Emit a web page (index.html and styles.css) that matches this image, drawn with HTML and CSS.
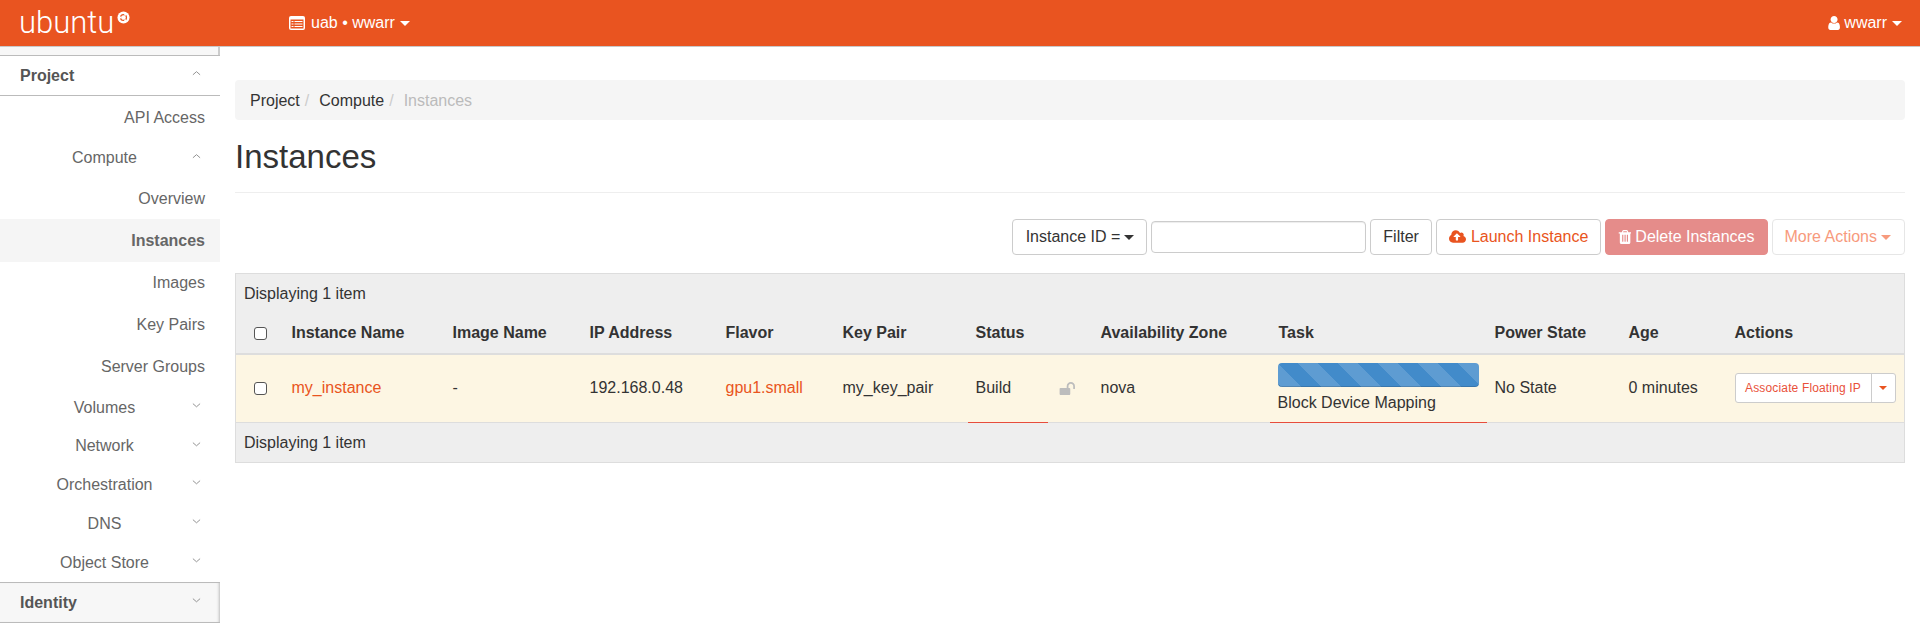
FILE: index.html
```html
<!DOCTYPE html>
<html lang="en">
<head>
    <meta charset="UTF-8">
    <title>Instances</title>
    <link rel="stylesheet" href="styles.css">
</head>
<body>
    <header class="topbar">
        <div class="brand">
            <span class="brand-name">ubuntu</span>
            <svg class="brand-mark" viewBox="0 0 14 14">
                <circle cx="7" cy="7" r="6.5" fill="#fff"/>
                <circle cx="7" cy="7" r="3.2" fill="none" stroke="#e95420" stroke-width="1.3"/>
                <circle cx="3.6" cy="7" r="1.1" fill="#fff"/>
                <circle cx="8.8" cy="4" r="1.1" fill="#fff"/>
                <circle cx="8.8" cy="10" r="1.1" fill="#fff"/>
            </svg>
        </div>
        <div class="project-picker">
            <svg class="icon-list" viewBox="0 0 16 14">
                <rect width="16" height="14" rx="2" fill="#fff"/>
                <rect x="1.5" y="3.5" width="13" height="9" fill="#e95420"/>
                <rect x="2.5" y="5" width="2" height="1" fill="#fff"/>
                <rect x="2.500" y="7.500" width="2" height="1" fill="#fff"/>
                <rect x="2.500" y="10" width="2" height="1" fill="#fff"/>
                <rect x="5.500" y="5" width="8" height="1" fill="#fff"/>
                <rect x="5.500" y="7.500" width="8" height="1" fill="#fff"/>
                <rect x="5.500" y="10" width="8" height="1" fill="#fff"/>
            </svg>
            <span>uab • wwarr</span>
            <span class="caret"></span>
        </div>
        <div class="user-menu">
            <svg class="icon-user" viewBox="128 128 1408 1536"><path fill="#fff" d="M1536 1399q0 109-62.500 187t-150.500 78h-854q-88 0-150.500-78t-62.500-187q0-85 8.500-160.500t31.500-152 58.500-131 94-89 134.500-34.500q131 128 313 128t313-128q76 0 134.500 34.500t94 89 58.500 131 31.500 152 8.500 160.500zm-256-887q0 159-112.500 271.500t-271.500 112.500-271.500-112.500-112.500-271.500 112.500-271.500 271.500-112.500 271.500 112.500 112.500 271.500z"/></svg>
            <span>wwarr</span>
            <span class="caret"></span>
        </div>
    </header>

    <div class="layout">
        <nav class="sidebar">
            <div class="side-strip"></div>
            <div class="side-head project">
                <span class="side-title">Project</span>
                <svg class="chev" viewBox="0 0 10 6"><path d="M1 5 5 1.500 9 5"/></svg>
            </div>
            <a class="side-leaf api">API Access</a>
            <div class="side-group compute">
                <span class="side-label">Compute</span>
                <svg class="chev" viewBox="0 0 10 6"><path d="M1 5 5 1.500 9 5"/></svg>
            </div>
            <a class="side-leaf overview">Overview</a>
            <a class="side-leaf active">Instances</a>
            <a class="side-leaf">Images</a>
            <a class="side-leaf">Key Pairs</a>
            <a class="side-leaf">Server Groups</a>
            <div class="side-group">
                <span class="side-label">Volumes</span>
                <svg class="chev" viewBox="0 0 10 6"><path d="M1 1.500 5 5 9 1.500"/></svg>
            </div>
            <div class="side-group network">
                <span class="side-label">Network</span>
                <svg class="chev" viewBox="0 0 10 6"><path d="M1 1.500 5 5 9 1.500"/></svg>
            </div>
            <div class="side-group">
                <span class="side-label">Orchestration</span>
                <svg class="chev" viewBox="0 0 10 6"><path d="M1 1.500 5 5 9 1.500"/></svg>
            </div>
            <div class="side-group">
                <span class="side-label">DNS</span>
                <svg class="chev" viewBox="0 0 10 6"><path d="M1 1.500 5 5 9 1.500"/></svg>
            </div>
            <div class="side-group">
                <span class="side-label">Object Store</span>
                <svg class="chev" viewBox="0 0 10 6"><path d="M1 1.500 5 5 9 1.500"/></svg>
            </div>
            <div class="side-head identity">
                <span class="side-title">Identity</span>
                <svg class="chev" viewBox="0 0 10 6"><path d="M1 1.500 5 5 9 1.500"/></svg>
            </div>
        </nav>

        <main class="content">
            <ol class="breadcrumb">
                <li>Project</li>
                <li class="sep">/</li>
                <li>Compute</li>
                <li class="sep">/</li>
                <li class="current">Instances</li>
            </ol>
            <h1 class="page-title">Instances</h1>

            <div class="toolbar">
                <button class="btn filter-field">Instance ID = <span class="caret dark"></span></button>
                <input class="filter-input" type="text">
                <button class="btn">Filter</button>
                <button class="btn btn-launch">
                    <svg class="icon-cloud" viewBox="0 128 1920 1536"><path fill="#e95420" d="M1280 864q0-14-9-23l-352-352q-9-9-23-9t-23 9l-351 351q-10 12-10 24 0 14 9 23t23 9h224v352q0 13 9.500 22.500t22.500 9.500h192q13 0 22.500-9.500t9.500-22.500v-352h224q13 0 22.500-9.500t9.500-22.500zm640 288q0 159-112.500 271.500t-271.500 112.500h-1088q-185 0-316.500-131.500t-131.500-316.500q0-130 70-240t188-165q-2-30-2-43 0-212 150-362t362-150q156 0 285.500 87t188.500 231q71-62 166-62 106 0 181 75t75 181q0 76-41 138 130 31 213.500 135.500t83.500 238.500z"/></svg>
                    Launch Instance
                </button>
                <button class="btn btn-delete">
                    <svg class="icon-trash" viewBox="128 128 1408 1536"><path fill="#fff" d="M704 1376v-704q0-14-9-23t-23-9h-64q-14 0-23 9t-9 23v704q0 14 9 23t23 9h64q14 0 23-9t9-23zm256 0v-704q0-14-9-23t-23-9h-64q-14 0-23 9t-9 23v704q0 14 9 23t23 9h64q14 0 23-9t9-23zm256 0v-704q0-14-9-23t-23-9h-64q-14 0-23 9t-9 23v704q0 14 9 23t23 9h64q14 0 23-9t9-23zm-544-992h448l-48-117q-7-9-17-11h-317q-10 2-17 11zm928 32v64q0 14-9 23t-23 9h-96v948q0 83-47 143.500t-113 60.500h-832q-66 0-113-58.500t-47-141.500v-952h-96q-14 0-23-9t-9-23v-64q0-14 9-23t23-9h309l70-167q15-37 54-63t79-26h320q40 0 79 26t54 63l70 167h309q14 0 23 9t9 23z"/></svg>
                    Delete Instances
                </button>
                <button class="btn btn-more">More Actions <span class="caret tinted"></span></button>
            </div>

            <table class="instances">
                <colgroup>
                    <col class="c-check"><col class="c-name"><col class="c-image"><col class="c-ip">
                    <col class="c-flavor"><col class="c-key"><col class="c-status"><col class="c-lock">
                    <col class="c-zone"><col class="c-task"><col class="c-power"><col class="c-age"><col class="c-actions">
                </colgroup>
                <thead>
                    <tr class="summary"><td colspan="13">Displaying 1 item</td></tr>
                    <tr class="heads">
                        <th><input class="check" type="checkbox"></th>
                        <th>Instance Name</th>
                        <th>Image Name</th>
                        <th>IP Address</th>
                        <th>Flavor</th>
                        <th>Key Pair</th>
                        <th colspan="2">Status</th>
                        <th>Availability Zone</th>
                        <th class="task-head">Task</th>
                        <th>Power State</th>
                        <th>Age</th>
                        <th>Actions</th>
                    </tr>
                </thead>
                <tbody>
                    <tr class="row-warn">
                        <td><input class="check" type="checkbox"></td>
                        <td><a class="link">my_instance</a></td>
                        <td>-</td>
                        <td>192.168.0.48</td>
                        <td><a class="link">gpu1.small</a></td>
                        <td>my_key_pair</td>
                        <td class="flagged">Build</td>
                        <td class="lock-cell">
                            <svg class="icon-unlock" viewBox="0 128 1728 1408"><path fill="#bdbdbd" d="M1728 576v256q0 26-19 45t-45 19h-64q-26 0-45-19t-19-45v-256q0-106-75-181t-181-75-181 75-75 181v192h96q40 0 68 28t28 68v576q0 40-28 68t-68 28h-960q-40 0-68-28t-28-68v-576q0-40 28-68t68-28h672v-192q0-185 131.500-316.500t316.500-131.500 316.500 131.500 131.500 316.500z"/></svg>
                        </td>
                        <td>nova</td>
                        <td class="flagged task-cell">
                            <div class="progress"></div>
                            <div class="task-name">Block Device Mapping</div>
                        </td>
                        <td>No State</td>
                        <td>0 minutes</td>
                        <td>
                            <div class="split-btn">
                                <span class="split-main">Associate Floating IP</span>
                                <span class="split-caret"><span class="caret small"></span></span>
                            </div>
                        </td>
                    </tr>
                </tbody>
                <tfoot>
                    <tr class="summary foot"><td colspan="13">Displaying 1 item</td></tr>
                </tfoot>
            </table>
        </main>
    </div>
</body>
</html>
```

FILE: styles.css
```css
* {
    box-sizing: border-box;
}
html, body {
    height: 630px;
    overflow: hidden;
}
body {
    margin: 0;
    font-family: "Liberation Sans", Arial, sans-serif;
    font-size: 16px;
    color: #333;
    background-color: #fff;
}

/* top bar */
.topbar {
    display: flex;
    align-items: center;
    height: 47px;
    background-color: #e95420;
    border-bottom: 1px solid #c8c8c8;
    color: #fff;
}
.brand {
    display: flex;
    align-items: flex-start;
    width: 289px;
    padding-left: 19px;
}
.brand-name {
    font-family: Roboto, sans-serif;
    font-weight: 300;
    font-size: 31px;
    line-height: 40px;
}
.brand-mark {
    width: 13px;
    height: 13px;
    margin: 8px 0 0 3px;
}
.project-picker {
    display: flex;
    align-items: center;
    flex: 1;
}
.icon-list {
    width: 16px;
    height: 14px;
    margin-right: 6px;
}
.user-menu {
    display: flex;
    align-items: center;
    padding-right: 18px;
}
.icon-user {
    width: 13px;
    height: 14px;
    margin-right: 4px;
}
.caret {
    display: inline-block;
    width: 0;
    height: 0;
    margin-left: 5px;
    border-top: 5px solid #fff;
    border-left: 5px solid transparent;
    border-right: 5px solid transparent;
    vertical-align: middle;
}
.caret.dark {
    margin-left: 0;
    border-top-color: #333;
}
.caret.tinted {
    margin-left: 0;
    border-top-color: #f79a7d;
}
.caret.small {
    margin-left: 0;
    border-top: 4px solid #e95420;
    border-left-width: 4px;
    border-right-width: 4px;
}

.layout {
    display: flex;
}

/* sidebar */
.sidebar {
    width: 220px;
    flex-shrink: 0;
    color: #666;
}
.side-strip {
    height: 9px;
    background-color: #f7f7f7;
    border-bottom: 1px solid #bbb;
    box-shadow: inset -2px 0 0 #ccc;
}
.side-head {
    display: flex;
    align-items: center;
    justify-content: space-between;
    padding: 0 18px 0 20px;
    font-weight: bold;
}
.side-head.project {
    height: 40px;
    border-bottom: 1px solid #bbb;
}
.side-head.identity {
    height: 41px;
    background-color: #f7f7f7;
    border-top: 1px solid #bbb;
    border-bottom: 1px solid #bbb;
    box-shadow: inset -3px 0 3px -2px #bbb;
}
.side-title {
    color: #555;
}
.side-leaf {
    display: flex;
    align-items: center;
    justify-content: flex-end;
    height: 42px;
    padding-right: 15px;
}
.side-leaf.api {
    padding-top: 1px;
}
.side-leaf.overview {
    height: 41px;
}
.side-leaf.active {
    height: 43px;
    background-color: #f5f5f5;
    font-weight: bold;
}
.side-group {
    display: flex;
    align-items: center;
    height: 39px;
    padding: 0 18px;
}
.side-group.compute {
    height: 40px;
}
.side-group.network {
    height: 38px;
}
.side-label {
    flex: 1;
    text-align: center;
    margin-left: -1px;
}
.chev {
    width: 9px;
    height: 6px;
    margin: -5px 1px 0 0;
    fill: none;
    stroke: #888;
    stroke-width: 1;
}

/* main column */
.content {
    flex: 1;
    min-width: 0;
    padding: 33px 15px 0;
}
.breadcrumb {
    display: flex;
    align-items: center;
    height: 40px;
    margin: 0;
    padding: 1px 15px 0;
    list-style: none;
    background-color: #f5f5f5;
    border-radius: 4px;
}
.breadcrumb .sep {
    color: #ccc;
    padding: 0 10px 0 5px;
}
.breadcrumb .current {
    color: #bbb;
}
.page-title {
    margin: 0;
    height: 73px;
    padding-top: 17px;
    font-size: 33px;
    font-weight: normal;
    line-height: 40px;
    color: #333;
    border-bottom: 1px solid #eee;
}

.toolbar {
    display: flex;
    justify-content: flex-end;
    align-items: center;
    gap: 4px;
    height: 36px;
    margin-top: 26px;
}
.btn {
    display: inline-flex;
    align-items: center;
    gap: 4px;
    height: 36px;
    padding: 0 12px;
    font: inherit;
    color: #333;
    background-color: #fff;
    border: 1px solid #ccc;
    border-radius: 4px;
}
.filter-field {
    padding-left: 13px;
}
.filter-input {
    width: 215px;
    height: 32px;
    padding: 0 12px;
    background-color: #fff;
    border: 1px solid #ccc;
    border-radius: 4px;
    box-shadow: inset 0 1px 1px rgba(0, 0, 0, 0.075);
}
.btn-launch {
    gap: 5px;
    color: #e95420;
}
.icon-cloud {
    width: 17px;
    height: 14px;
}
.btn-delete {
    color: #fff;
    background-color: #e58c8a;
    border-color: #e58c8a;
}
.icon-trash {
    width: 13px;
    height: 14px;
}
.btn-more {
    padding-right: 13px;
    color: #f79a7d;
    border-color: #e6e6e6;
}

/* table */
.instances {
    width: 100%;
    margin-top: 18px;
    table-layout: fixed;
    border-collapse: collapse;
    border: 1px solid #ddd;
}
.c-check { width: 48px; }
.c-name { width: 161px; }
.c-image { width: 137px; }
.c-ip { width: 136px; }
.c-flavor { width: 117px; }
.c-key { width: 133px; }
.c-status { width: 80px; }
.c-lock { width: 45px; }
.c-zone { width: 177px; }
.c-task { width: 217px; }
.c-power { width: 134px; }
.c-age { width: 106px; }
.summary td {
    height: 40px;
    padding: 0 8px;
    background-color: #eee;
}
.summary.foot td {
    height: 40px;
    border-top: 1px solid #ddd;
}
.heads th {
    height: 40px;
    padding: 0 8px;
    text-align: left;
    font-weight: bold;
    background-color: #eee;
    border-bottom: 2px solid #ddd;
}
.heads .task-head {
    padding-left: 9px;
}
.heads th:first-child, .row-warn td:first-child {
    padding-left: 18px;
}
.row-warn td {
    height: 69px;
    padding: 0 8px;
    background-color: #fdf6e3;
}
.row-warn td.flagged {
    border-bottom: 1px solid #e74c3c;
}
.link {
    color: #e95420;
}
.check {
    appearance: none;
    display: block;
    width: 13px;
    height: 13px;
    margin: 0;
    background-color: #fff;
    border: 1px solid #555;
    border-radius: 3px;
}
.icon-unlock {
    display: block;
    width: 16px;
    height: 13px;
    margin: 0 0 0 3px;
}
.task-cell {
    vertical-align: top;
}
.row-warn .task-cell {
    padding-top: 8px;
}
.progress {
    height: 24px;
    border-radius: 4px;
    background-color: #428bca;
    background-image: linear-gradient(45deg, rgba(255, 255, 255, 0.15) 25%, transparent 25%, transparent 50%, rgba(255, 255, 255, 0.15) 50%, rgba(255, 255, 255, 0.15) 75%, transparent 75%);
    background-size: 40px 40px;
    background-position: 20px 0;
    box-shadow: inset 0 -1px 0 rgba(0, 0, 0, 0.15);
}
.task-name {
    margin-top: 6px;
    line-height: 20px;
}
.split-btn {
    display: flex;
    width: 161px;
    height: 30px;
    background-color: #fff;
    border: 1px solid #ccc;
    border-radius: 3px;
    font-size: 12px;
    color: #e9513a;
}
.split-main {
    display: flex;
    align-items: center;
    justify-content: center;
    width: 136px;
    letter-spacing: 0.15px;
    border-right: 1px solid #ccc;
}
.split-caret {
    display: flex;
    align-items: center;
    justify-content: center;
    flex: 1;
}
```
